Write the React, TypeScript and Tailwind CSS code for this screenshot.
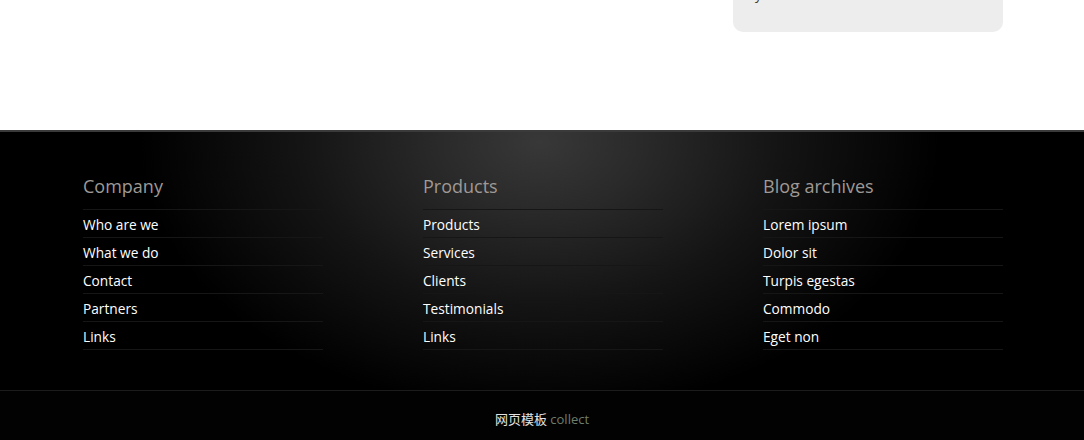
import React from "react";

const cols = [
  { title: "Company", items: ["Who are we", "What we do", "Contact", "Partners", "Links"] },
  { title: "Products", items: ["Products", "Services", "Clients", "Testimonials", "Links"] },
  { title: "Blog archives", items: ["Lorem ipsum", "Dolor sit", "Turpis egestas", "Commodo", "Eget non"] },
];

export default function App() {
  return (
    <div className="w-[1084px] h-[440px] overflow-hidden bg-white font-['Open_Sans','Noto_Sans',sans-serif]">
      <div className="h-[130px] bg-white pl-[83px]">
        <div className="w-[920px] flex justify-end">
          <div className="w-[270px] overflow-hidden rounded-b-[10px] bg-[#ededed] pl-[22px] pb-[29px]">
            <div className="mt-[-13px] h-[16px] leading-[16px] text-[13px] text-[#3a3020]">y</div>
          </div>
        </div>
      </div>
      <footer className="border-t-2 border-[#3a3a3a] bg-black bg-[image:radial-gradient(400px_270px_at_540px_10px,#383838,#2a2a2a_25%,#141414_60%,#000_100%)] bg-no-repeat">
        <div className="ml-[83px] w-[920px] grid grid-cols-3 gap-[100px] pt-[42px] pb-[40px]">
          {cols.map((c) => (
            <div key={c.title}>
              <h3 className="text-[18px] leading-[24px] font-normal text-[#9f9996] pb-[11px] border-b border-[#161616]">
                {c.title}
              </h3>
              <ul>
                {c.items.map((it, i) => (
                  <li
                    key={i}
                    className="h-[28px] pt-[3px] flex items-center border-b border-[#161616] text-[13.7px] text-white"
                  >
                    {it}
                  </li>
                ))}
              </ul>
            </div>
          ))}
        </div>
        <div className="border-t border-[#1c1c1c] bg-[#020202] h-[50px] pt-[18px] text-center text-[13px] leading-[20px]">
          <span className="text-[#e2e2e2] font-['Noto_Sans_CJK_SC',sans-serif]">网页模板</span>{" "}
          <span className="text-[#6f7d6b]">collect</span>
        </div>
      </footer>
    </div>
  );
}
